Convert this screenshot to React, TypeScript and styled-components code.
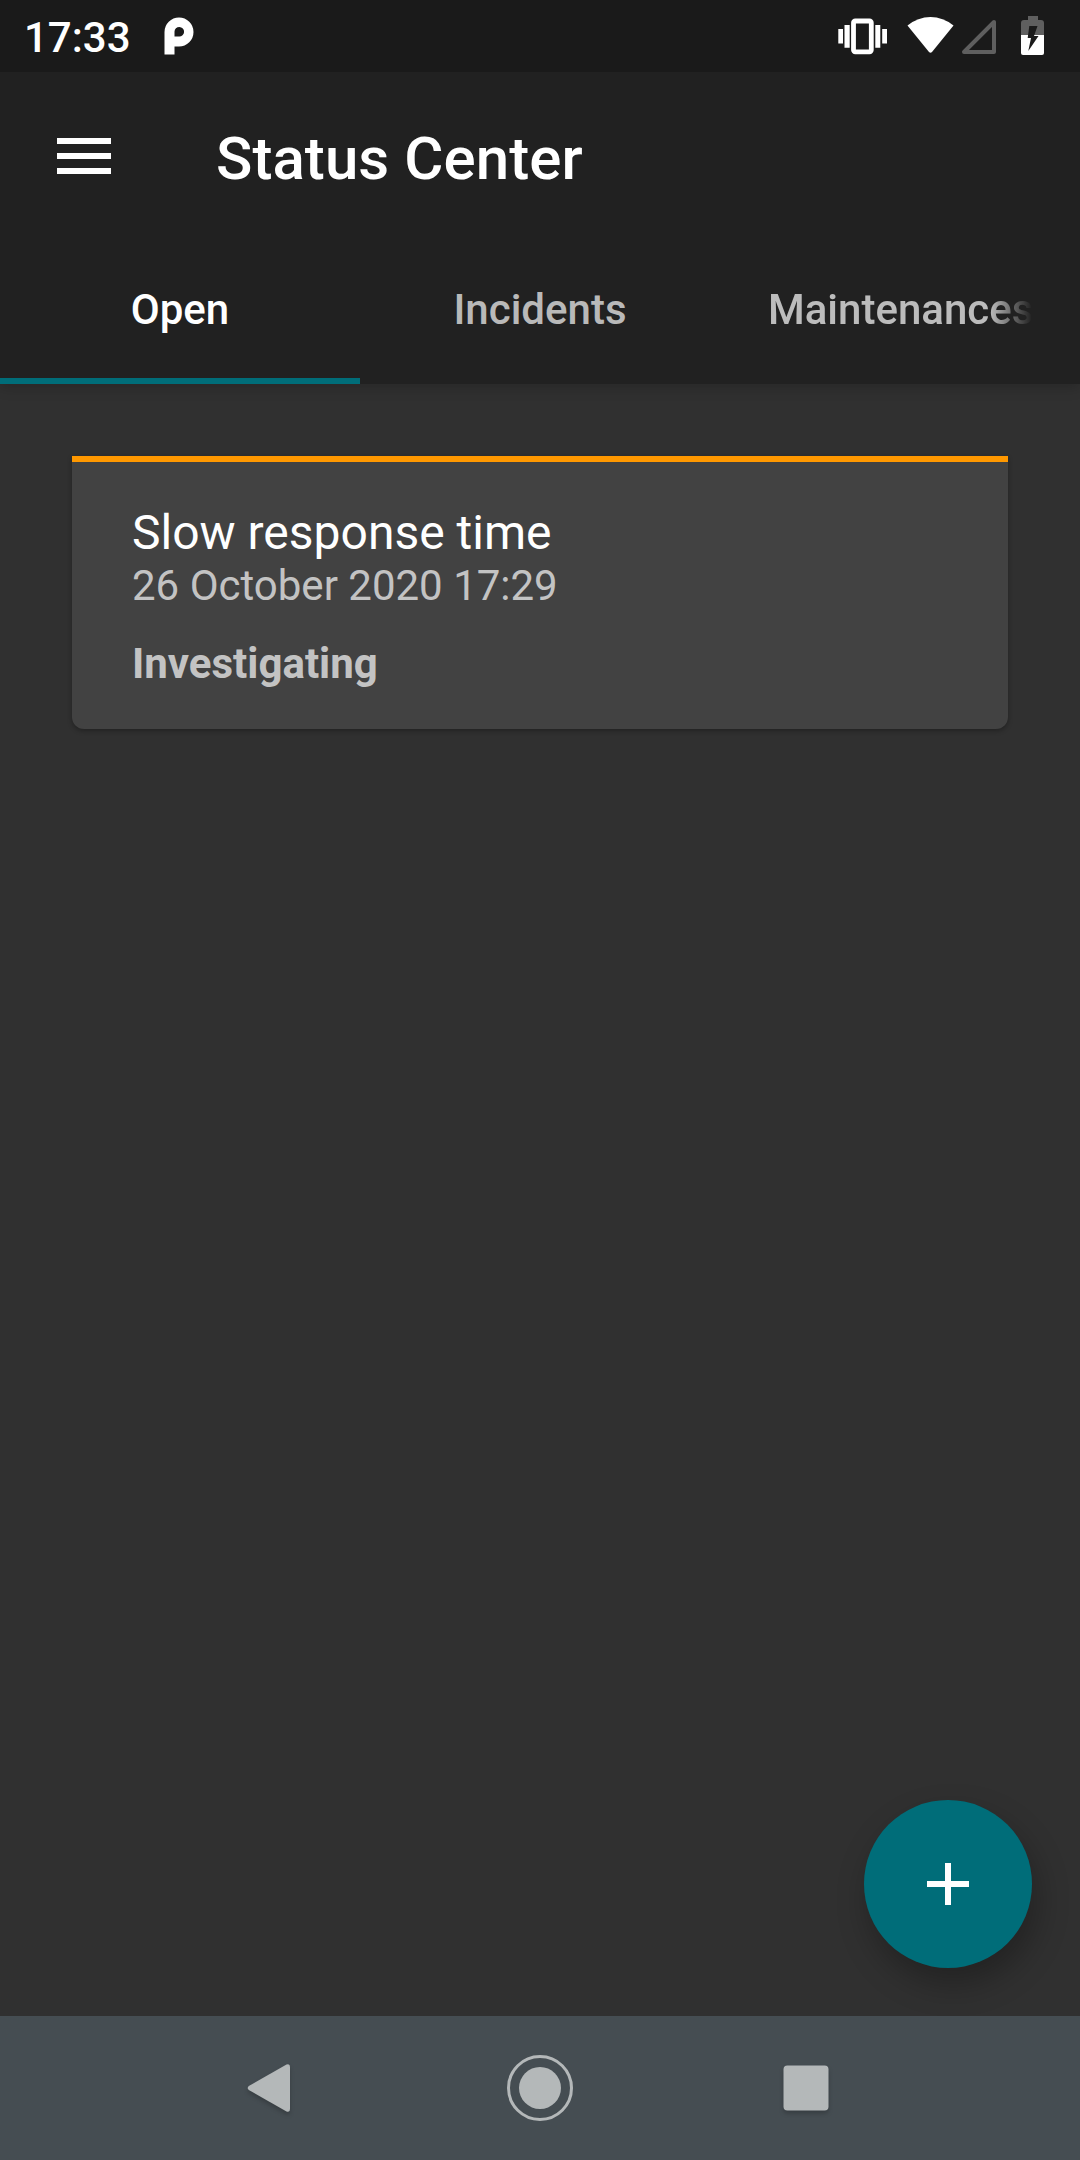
import React from 'react';
import styled, { createGlobalStyle } from 'styled-components';

const GlobalStyle = createGlobalStyle`
  *, *::before, *::after { box-sizing: border-box; }
  body {
    margin: 0;
    background: #303030;
    font-family: Roboto, "Liberation Sans", sans-serif;
    color: #ffffff;
  }
`;

const Screen = styled.div`
  width: 1080px;
  height: 2160px;
  display: flex;
  flex-direction: column;
  overflow: hidden;
  background: #303030;
`;

const StatusBar = styled.div`
  height: 72px;
  flex: none;
  position: relative;
  z-index: 1;
  display: flex;
  align-items: center;
  justify-content: space-between;
  padding: 0 32px 0 24px;
  background: #1a1a1a;
`;

const StatusGroup = styled.div`
  display: flex;
  align-items: center;
  height: 72px;
`;

const Clock = styled.span`
  width: 106px;
  margin: 4px 34px 0 0;
  font-size: 42px;
  font-weight: 500;
  line-height: 50px;
  white-space: nowrap;
`;

const Glyph = styled.svg`
  display: block;
  flex: none;
`;

const Header = styled.header`
  flex: none;
  display: flex;
  flex-direction: column;
  background: #212121;
  box-shadow: 0 4px 12px rgba(0, 0, 0, 0.18);
`;

const Toolbar = styled.div`
  height: 168px;
  display: flex;
  align-items: center;
  padding: 0 57px;
`;

const MenuButton = styled.button`
  width: 159px;
  padding: 0;
  border: 0;
  background: none;
  color: inherit;
`;

const Title = styled.h1`
  margin: 5px 0 0;
  font-size: 60px;
  font-weight: 500;
  line-height: 71px;
  letter-spacing: 0.07px;
`;

const Tabs = styled.nav`
  height: 144px;
  display: grid;
  grid-template-columns: repeat(3, 360px);
`;

const Tab = styled.div<{ $active?: boolean }>`
  display: flex;
  align-items: center;
  justify-content: center;
  padding: 2px 48px 0;
  overflow: hidden;
  border-bottom: 6px solid ${(p) => (p.$active ? '#006d79' : 'transparent')};
  color: ${(p) => (p.$active ? '#ffffff' : 'rgba(255, 255, 255, 0.7)')};
`;

const TabLabel = styled.span<{ $fade?: boolean }>`
  max-width: 264px;
  overflow: hidden;
  font-size: 42px;
  font-weight: 500;
  line-height: 50px;
  white-space: nowrap;
  mask-image: ${(p) => (p.$fade ? 'linear-gradient(to right, #000 222px, transparent 264px)' : 'none')};
`;

const Content = styled.main`
  flex: 1;
  padding: 72px;
`;

const Card = styled.article`
  height: 273px;
  display: flex;
  flex-direction: column;
  border-radius: 0 0 12px 12px;
  background: #424242;
  box-shadow: 0 2px 5px rgba(0, 0, 0, 0.3);
`;

const Severity = styled.div`
  height: 6px;
  flex: none;
  background: #ff9800;
`;

const CardBody = styled.div`
  display: flex;
  flex-direction: column;
  padding: 43px 60px 0;
`;

const IncidentTitle = styled.h2`
  margin: 0;
  font-size: 48px;
  font-weight: 400;
  line-height: 56px;
`;

const IncidentDate = styled.time`
  color: rgba(255, 255, 255, 0.7);
  font-size: 42px;
  line-height: 49px;
`;

const IncidentState = styled.strong`
  margin-top: 29px;
  color: rgba(255, 255, 255, 0.7);
  font-size: 42px;
  font-weight: 700;
  line-height: 49px;
`;

const AddButton = styled.button`
  position: absolute;
  left: 864px;
  top: 1800px;
  width: 168px;
  height: 168px;
  display: flex;
  align-items: center;
  justify-content: center;
  padding: 0;
  border: 0;
  border-radius: 50%;
  background: #006d79;
  color: #ffffff;
  box-shadow: 5px 16px 32px rgba(0, 0, 0, 0.28);
`;

const NavBar = styled.footer`
  height: 144px;
  flex: none;
  position: relative;
  display: flex;
  align-items: center;
  gap: 210px;
  padding-left: 247px;
  background: #454d52;
`;

const NavGlyph = styled(Glyph)`
  overflow: visible;
  filter: drop-shadow(0 3px 2px rgba(0, 0, 0, 0.2));
`;

export default function App() {
  return (
    <Screen>
      <GlobalStyle />
      <StatusBar>
        <StatusGroup>
          <Clock>17:33</Clock>
          <Glyph width="30" height="38" viewBox="0 0 30 38" fill="#fff">
            <path fillRule="evenodd" d="M.5 37.5V15A14.5 14.5 0 1 1 15 29.500H10.500V37.500ZM10.500 19.500H15A4.800 4.800 0 1 0 10.500 14.700Z" />
          </Glyph>
        </StatusGroup>
        <StatusGroup>
          <Glyph width="212" height="72" viewBox="836 0 212 72">
            <path fill="#fff" d="M838.300 29h4.700v14.500h-4.700zM844.500 25h5.200v22.700h-5.200zM875.300 25h5v22.700h-5zM882.200 29h4.800v14.500h-4.800z" />
            <rect x="853.500" y="21" width="17.800" height="30.800" rx="1.800" fill="none" stroke="#fff" strokeWidth="4.800" />
            <path fill="#fff" d="M907.500 25.500Q918 17 930.500 17T953.500 25.500L932 52Q930.500 53.500 929 52Z" />
            <path d="M964 52L994 22V52Z" fill="none" stroke="#5f5f5f" strokeWidth="4" strokeLinejoin="round" />
            <path fill="#5f5f5f" d="M1028 16h10v4h3q3 0 3 3v12h-23V23q0-3 3-3h4z" />
            <path fill="#fff" d="M1021 35h23v18q0 2-2 2h-19q-2 0-2-2z" />
            <path fill="#1a1a1a" d="M1029.300 26H1037.500L1034 36H1038.500L1028.300 51L1031 38H1027.700Z" />
          </Glyph>
        </StatusGroup>
      </StatusBar>
      <Header>
        <Toolbar>
          <MenuButton aria-label="Menu">
            <Glyph width="54" height="36" viewBox="0 0 54 36" fill="#fff">
              <path d="M0 0h54v6H0zM0 15h54v6H0zM0 30h54v6H0z" />
            </Glyph>
          </MenuButton>
          <Title>Status Center</Title>
        </Toolbar>
        <Tabs>
          <Tab $active><TabLabel>Open</TabLabel></Tab>
          <Tab><TabLabel>Incidents</TabLabel></Tab>
          <Tab><TabLabel $fade>Maintenances</TabLabel></Tab>
        </Tabs>
      </Header>
      <Content>
        <Card>
          <Severity />
          <CardBody>
            <IncidentTitle>Slow response time</IncidentTitle>
            <IncidentDate>26 October 2020 17:29</IncidentDate>
            <IncidentState>Investigating</IncidentState>
          </CardBody>
        </Card>
      </Content>
      <AddButton aria-label="Add">
        <Glyph width="42" height="42" viewBox="0 0 42 42" fill="#fff">
          <path d="M18 0h6v18h18v6H24v18h-6V24H0v-6h18z" />
        </Glyph>
      </AddButton>
      <NavBar>
        <NavGlyph width="50" height="48" viewBox="0 0 50 48" fill="#b4b8b9">
          <path d="M1.800 22L39.500 .6Q43 -.8 43 3V45Q43 48.800 39.500 47.400L1.800 26Q-.4 24 1.800 22Z" />
        </NavGlyph>
        <Glyph width="66" height="66" viewBox="0 0 66 66">
          <circle cx="33" cy="33" r="31.500" fill="none" stroke="#b4b8b9" strokeWidth="3" />
          <circle cx="33" cy="33" r="21" fill="#b4b8b9" />
        </Glyph>
        <NavGlyph width="46" height="46" viewBox="0 0 46 46">
          <rect x=".5" y=".5" width="45" height="45" rx="4" fill="#b4b8b9" />
        </NavGlyph>
      </NavBar>
    </Screen>
  );
}
